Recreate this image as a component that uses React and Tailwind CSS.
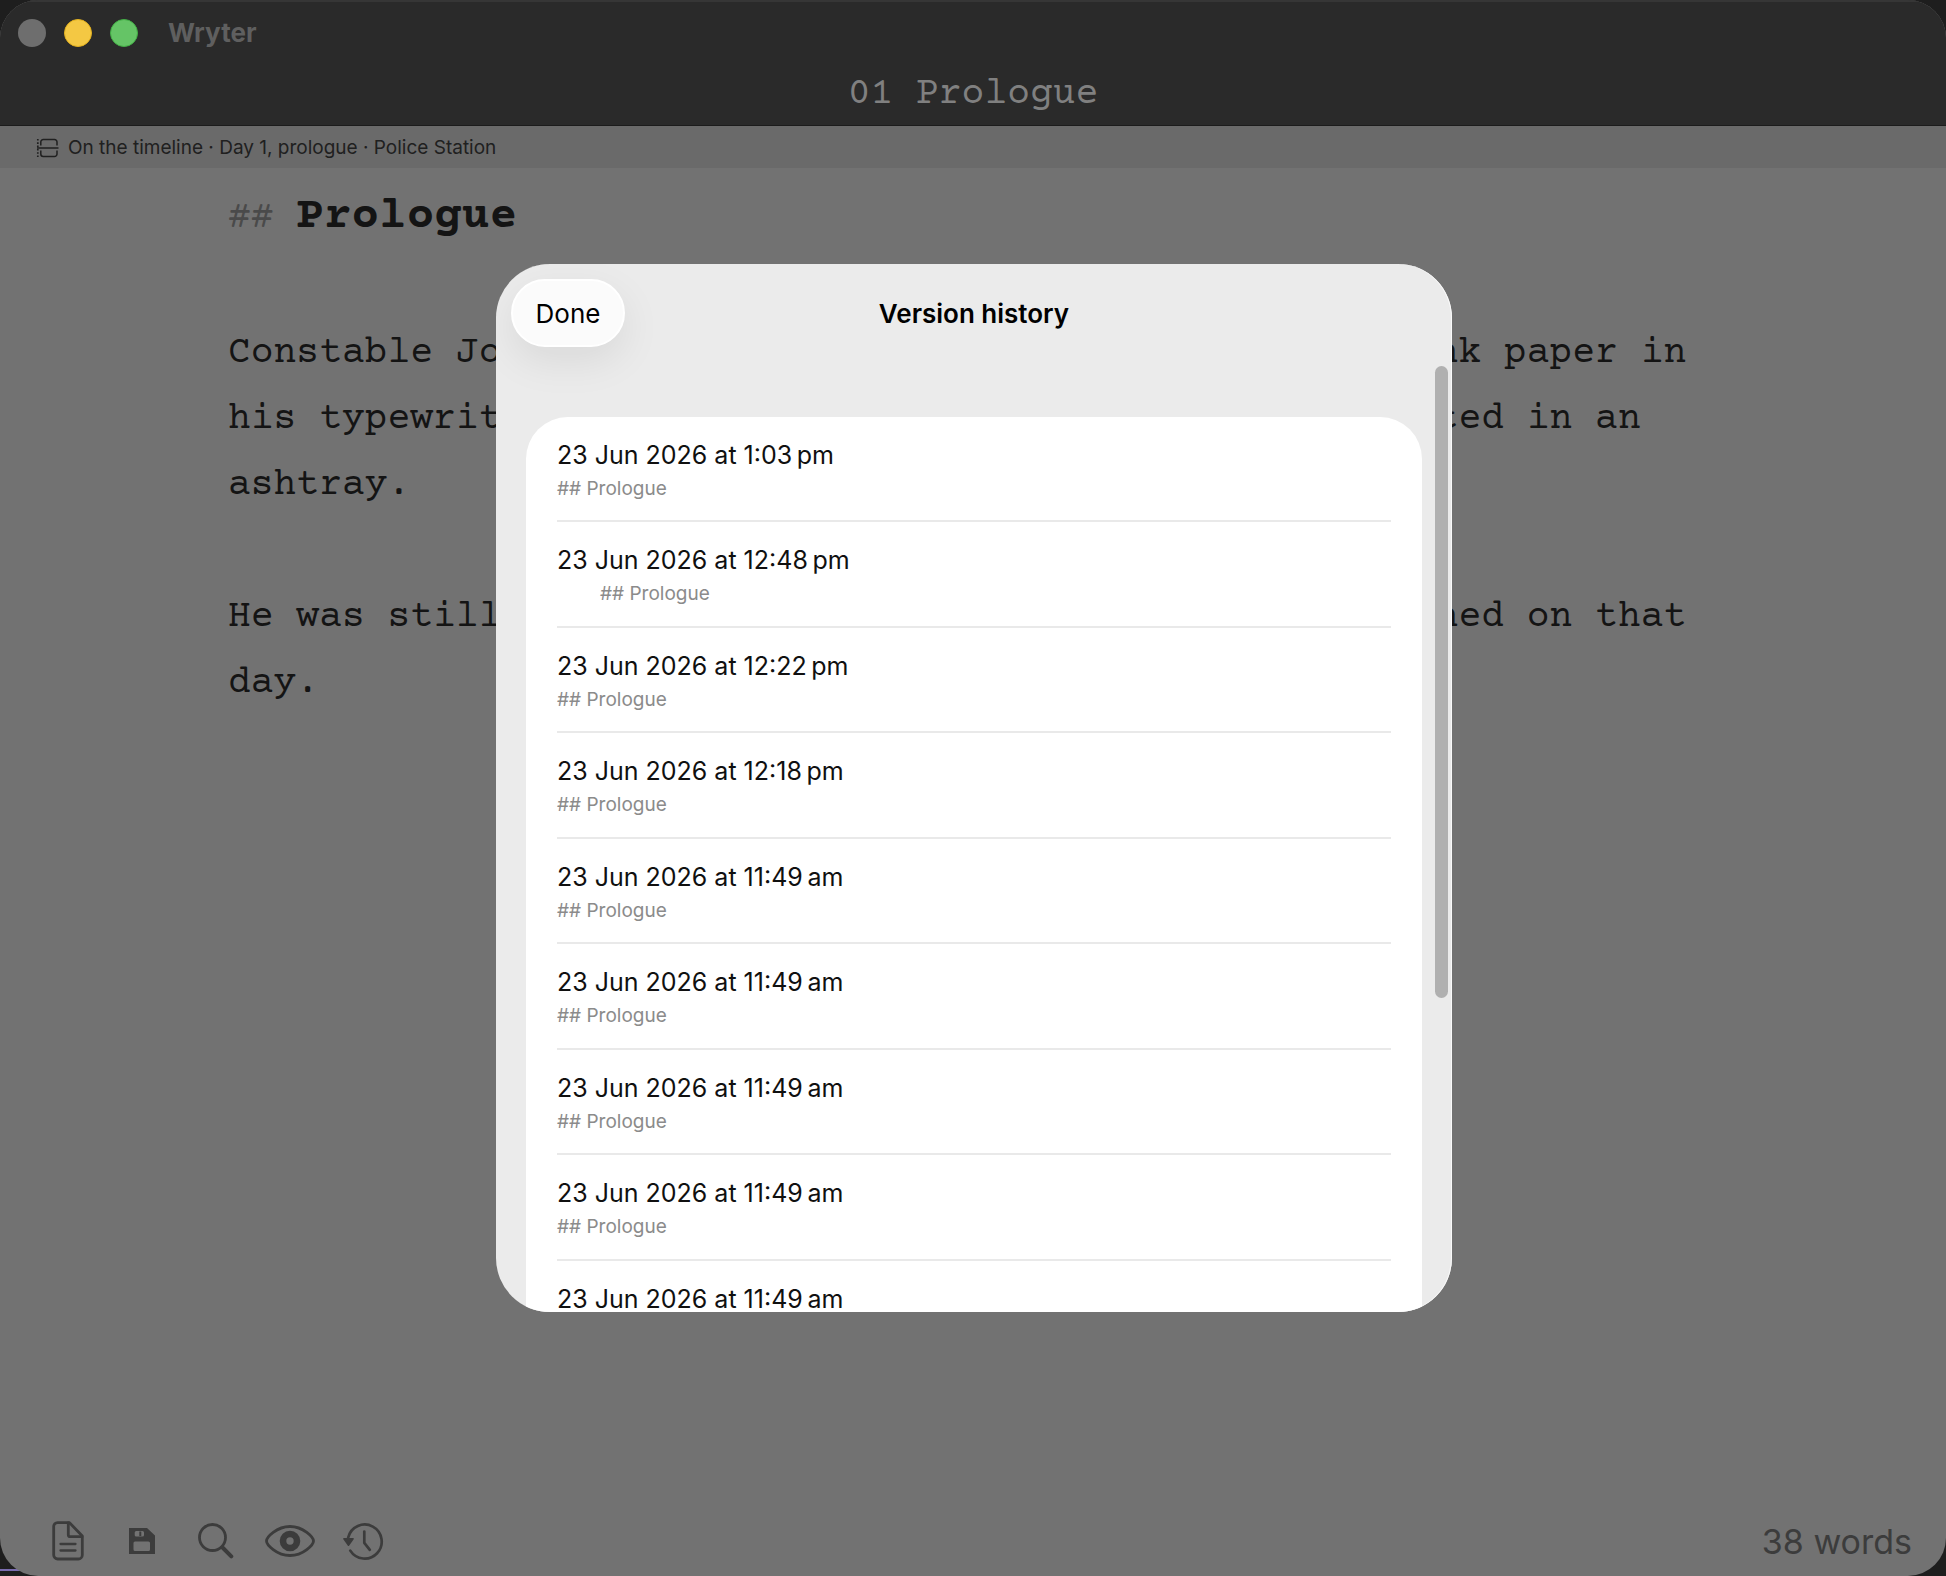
const versions = [
  { date: "23 Jun 2026 at 1:03", half: "pm" },
  { date: "23 Jun 2026 at 12:48", half: "pm", indented: true },
  { date: "23 Jun 2026 at 12:22", half: "pm" },
  { date: "23 Jun 2026 at 12:18", half: "pm" },
  { date: "23 Jun 2026 at 11:49", half: "am" },
  { date: "23 Jun 2026 at 11:49", half: "am" },
  { date: "23 Jun 2026 at 11:49", half: "am" },
  { date: "23 Jun 2026 at 11:49", half: "am" },
  { date: "23 Jun 2026 at 11:49", half: "am" },
];

function TimelineIcon() {
  return (
    <svg width="24" height="20" viewBox="0 0 24 20" fill="none" stroke="currentColor" strokeWidth="1.5" aria-hidden="true">
      <path d="M4.800 7.500V4a2.500 2.500 0 0 1 2.500-2.500h11.200A2.500 2.500 0 0 1 21 4v3.500" />
      <path d="M4.800 12.500V16a2.500 2.500 0 0 0 2.500 2.500h11.200A2.500 2.500 0 0 0 21 16v-3.500" />
      <path d="M1 10h21.500" />
      <path d="M1.800 1v18" strokeDasharray="1.600 1.700" strokeWidth="1.700" />
    </svg>
  );
}

function DocumentIcon() {
  return (
    <svg width="32" height="40" viewBox="0 0 32 40" fill="none" stroke="currentColor" strokeWidth="2.800" strokeLinejoin="round" strokeLinecap="round" aria-hidden="true">
      <path d="M5.500 1.700h12L30.300 15v19a4 4 0 0 1-4 4H5.700a4 4 0 0 1-4-4V5.500a3.800 3.800 0 0 1 3.800-3.800z" />
      <path d="M16.300 2v11.700a2 2 0 0 0 2 2H30" />
      <path d="M8.500 23h15M8.500 29.500h15" strokeWidth="2.300" />
    </svg>
  );
}

function SaveIcon() {
  return (
    <svg width="26" height="26" viewBox="0 0 26 26" fill="currentColor" aria-hidden="true">
      <path fillRule="evenodd" d="M0 0h18l8 7.500V26H0zM7.200 3a1.500 1.500 0 0 0-1.500 1.500v2.500a1.500 1.500 0 0 0 1.500 1.500h6.300a1.500 1.500 0 0 0 1.500-1.500V4.500A1.500 1.500 0 0 0 13.500 3zM6 13.500a1.500 1.500 0 0 0-1.500 1.500v6.500A1.500 1.500 0 0 0 6 23h13.500a1.500 1.500 0 0 0 1.500-1.500V15a1.500 1.500 0 0 0-1.500-1.500z" />
      <path d="M10.300 3.500h2v4.500h-2z" />
    </svg>
  );
}

function SearchIcon() {
  return (
    <svg width="36" height="36" viewBox="0 0 36 36" fill="none" stroke="currentColor" strokeLinecap="round" aria-hidden="true">
      <circle cx="14.500" cy="14.500" r="13" strokeWidth="2.800" />
      <path d="M24.500 24.500l8.800 8.800" strokeWidth="4" />
    </svg>
  );
}

function EyeIcon() {
  return (
    <svg width="50" height="32" viewBox="0 0 50 32" fill="none" stroke="currentColor" aria-hidden="true">
      <path d="M1.500 16C1.500 12.500 11.500 1.500 25 1.500S48.500 12.500 48.500 16 38.500 30.500 25 30.500 1.500 19.500 1.500 16z" strokeWidth="2.800" />
      <circle cx="25" cy="16" r="7" strokeWidth="6.600" />
    </svg>
  );
}

function HistoryIcon() {
  return (
    <svg width="42" height="38" viewBox="0 0 42 38" fill="none" stroke="currentColor" strokeWidth="2.700" strokeLinecap="round" strokeLinejoin="round" aria-hidden="true">
      <path d="M5.200 15.500A17 17 0 1 1 7.300 28.600" />
      <path d="M0.900 16.800h9.200l-4.600 6.500z" fill="currentColor" strokeWidth="1.500" />
      <path d="M21.300 9.500v11.300l5.500 7" />
    </svg>
  );
}

const tools = [
  { label: "Document", Icon: DocumentIcon },
  { label: "Save", Icon: SaveIcon },
  { label: "Search", Icon: SearchIcon },
  { label: "Preview", Icon: EyeIcon },
  { label: "Version history", Icon: HistoryIcon },
];

function VersionRow({ date, half, indented }) {
  return (
    <li className="flex flex-1 flex-col border-b-2 border-[#e9e9e9] pt-5">
      <span className="text-[25px] leading-9 text-[#101010]">
        {date}
        {"\u2009"}
        {half}
      </span>
      <span className={indented ? "pl-[43px] text-[19px] leading-8 text-[#8b8b8b]" : "text-[19px] leading-8 text-[#8b8b8b]"}>
        ## Prologue
      </span>
    </li>
  );
}

function VersionHistory() {
  return (
    <div className="absolute inset-0 flex justify-center py-[264px] pl-0.5">
      <section
        role="dialog"
        aria-labelledby="history-title"
        className="relative flex w-[956px] flex-col overflow-hidden rounded-[54px] bg-[#ebebeb] shadow-[inset_-1px_0_0_#fafafa]"
      >
        <header className="grid shrink-0 grid-cols-[1fr_auto_1fr] items-center px-[15px] pt-[15px]">
          <button
            type="button"
            className="h-[68px] w-[114px] rounded-[34px] border-2 border-white bg-[#fbfbfb] text-[26px] text-black shadow-[0_14px_40px_rgba(0,0,0,0.08)]"
          >
            Done
          </button>
          <h2 id="history-title" className="text-[26px] font-semibold text-black">
            Version history
          </h2>
        </header>
        <div className="mx-[30px] mt-[70px] min-h-0 flex-1">
          <ul className="flex h-[949px] flex-col rounded-t-[42px] bg-white px-[31px]">
            {versions.map((version, index) => (
              <VersionRow key={index} {...version} />
            ))}
          </ul>
        </div>
        <div className="absolute top-[102px] right-1 h-[632px] w-[13px] rounded-full bg-[#b0b0b0]" />
      </section>
    </div>
  );
}

export default function App() {
  return (
    <div className="relative flex min-h-screen flex-col bg-[#1e1e1e] font-['Inter',sans-serif]">
      <div className="absolute bottom-[5px] left-0 h-0.5 w-6 bg-[#7a6cb0]" />
      <div className="relative flex flex-1 flex-col overflow-hidden rounded-[38px] bg-[#727272]">
        <header className="flex h-[126px] flex-col border-t-2 border-b border-t-[#363636] border-b-[#1c1c1c] bg-[#2a2a2a]">
          <div className="flex items-center pt-4 pl-[18px]">
            <div className="flex gap-[18px]">
              <button type="button" aria-label="Close" className="size-7 rounded-full bg-[#6e6e6e]" />
              <button type="button" aria-label="Minimize" className="size-7 rounded-full border border-[#e3b11f] bg-[#f4c843]" />
              <button type="button" aria-label="Zoom" className="size-7 rounded-full border border-[#43b046] bg-[#65c466]" />
            </div>
            <span className="ml-[30px] text-[26px] leading-[30px] font-bold text-[#5f5f5f]">Wryter</span>
          </div>
          <h1 className="mt-[25px] text-center font-['Courier_Prime','Liberation_Mono',monospace] text-[38px] leading-[44px] text-[#808080]">
            01 Prologue
          </h1>
        </header>

        <div className="flex h-[42px] items-center gap-2 bg-[#6a6a6a] pt-0.5 pl-9 text-[19px] text-[#202020]">
          <TimelineIcon />
          <span>On the timeline · Day 1, prologue · Police Station</span>
        </div>

        <main className="flex-1 px-[228px] pt-4 font-['Courier_Prime','Liberation_Mono',monospace] text-[38px] leading-[66px] text-[#141414]">
          <h2 className="text-[46px] font-bold whitespace-pre">
            <span className="text-[38px] font-normal text-[#4a4a4a]">## </span>Prologue
          </h2>
          <p className="mt-[69px]">
            Constable Johnson sat back and stared at the same blank paper in his typewriter. One cigarette burned where
            it had rested in an ashtray.
          </p>
          <p className="mt-[66px]">He was still unable to explain exactly what had happened on that day.</p>
        </main>

        <footer className="flex h-[70px] items-center justify-between pr-[34px] pl-[31px] text-[#3c3c3c]">
          <div className="flex items-center">
            {tools.map(({ label, Icon }) => (
              <button key={label} type="button" aria-label={label} className="flex w-[74px] justify-center">
                <Icon />
              </button>
            ))}
          </div>
          <span className="text-[34px]">38 words</span>
        </footer>
      </div>
      <VersionHistory />
    </div>
  );
}
